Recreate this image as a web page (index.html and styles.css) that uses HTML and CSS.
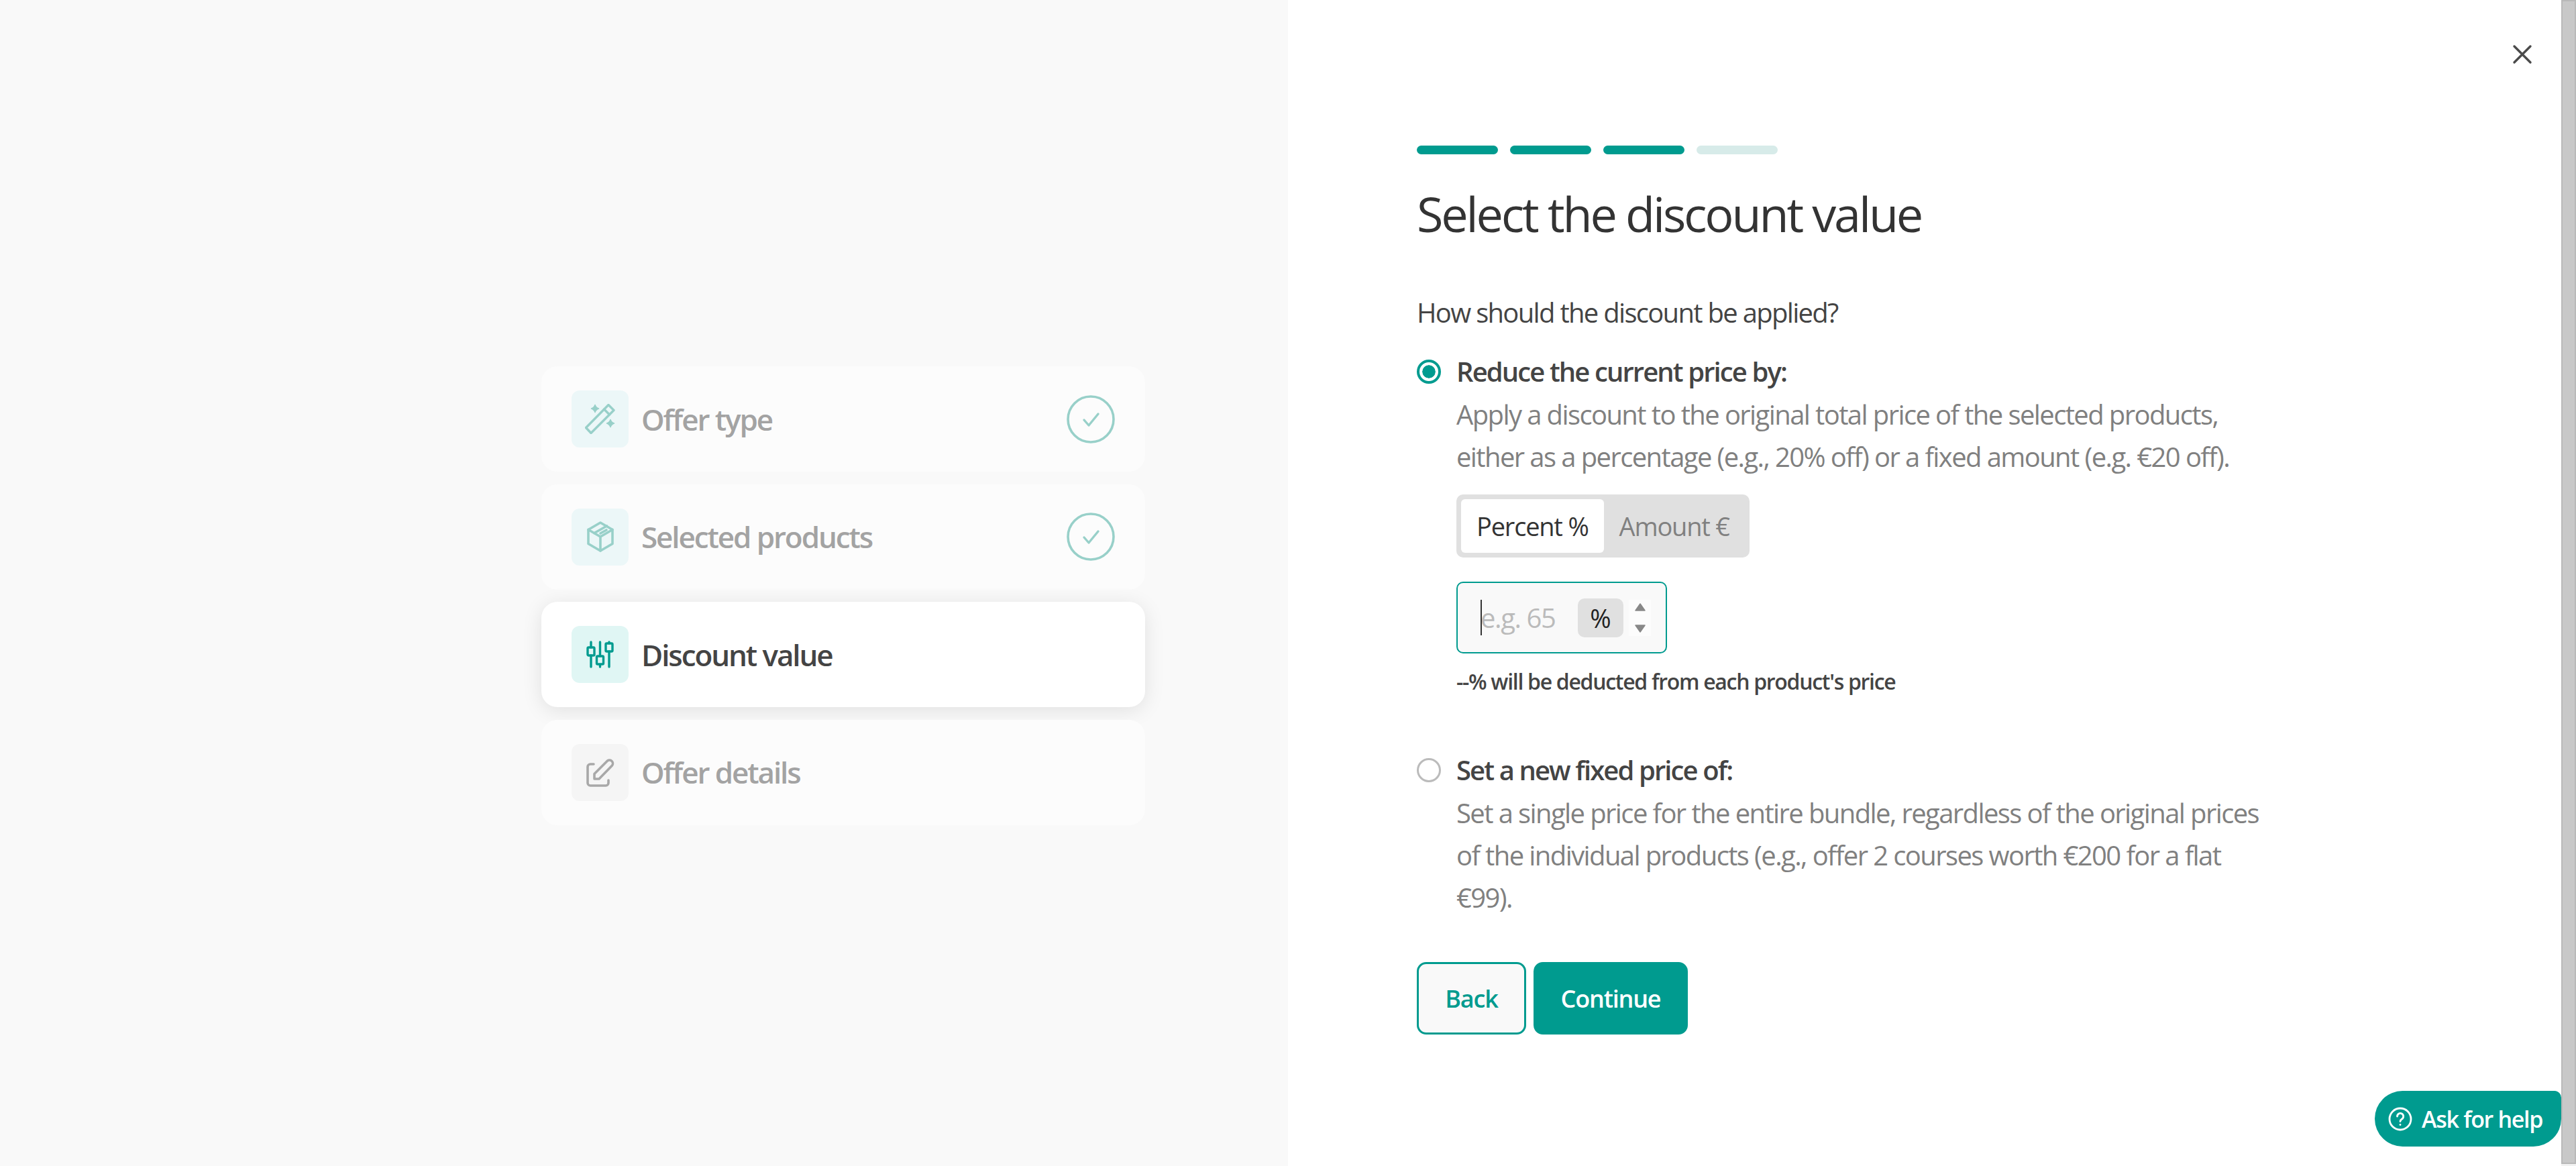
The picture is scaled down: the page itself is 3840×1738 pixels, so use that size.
FILE: index.html
```html
<!DOCTYPE html>
<html lang="en">
<head>
    <meta charset="UTF-8">
    <meta name="viewport" content="width=device-width, initial-scale=1.0">
    <title>Select the discount value</title>
    <link rel="stylesheet" href="styles.css">
</head>
<body>

<div class="steps-panel">
    <div class="steps">
        <div class="step done">
            <span class="step-icon">
                <svg width="45" height="45" viewBox="0 0 45 45" fill="none" stroke="currentColor" stroke-width="3.4" stroke-linejoin="round" stroke-linecap="round">
                    <path d="M35 1.5 43 9.5 9 43.5 1.5 35.5Z"/>
                    <path d="M28.5 8 36.5 16"/>
                    <path d="M15 1.5c1 3 2.500 4.500 5.500 5.500-3 1-4.500 2.500-5.500 5.500-1-3-2.500-4.500-5.500-5.500 3-1 4.500-2.500 5.500-5.500Z" fill="currentColor" stroke-width="1.500"/>
                    <path d="M38 23.500c1 3 2.500 4.500 5.500 5.500-3 1-4.500 2.500-5.500 5.500-1-3-2.500-4.500-5.500-5.500 3-1 4.500-2.500 5.500-5.500Z" fill="currentColor" stroke-width="1.500"/>
                </svg>
            </span>
            <span class="step-name">Offer type</span>
            <svg class="step-check" width="72" height="72" viewBox="0 0 72 72" fill="none" stroke="currentColor" stroke-linecap="round" stroke-linejoin="round">
                <circle cx="36" cy="36" r="34" stroke-width="3.6"/>
                <path d="M26 37 33 45 47 28" stroke-width="3.4"/>
            </svg>
        </div>
        <div class="step done">
            <span class="step-icon">
                <svg width="40" height="46" viewBox="0 0 40 46" fill="none" stroke="currentColor" stroke-width="3.600" stroke-linejoin="round" stroke-linecap="round">
                    <path d="M20 2 38 12.500V33.500L20 44 2 33.500V12.500Z"/>
                    <path d="M2 12.500 20 23 38 12.500M20 23V44"/>
                    <path d="M11 17.500 29.500 7M20 18 29 13"/>
                </svg>
            </span>
            <span class="step-name">Selected products</span>
            <svg class="step-check" width="72" height="72" viewBox="0 0 72 72" fill="none" stroke="currentColor" stroke-linecap="round" stroke-linejoin="round">
                <circle cx="36" cy="36" r="34" stroke-width="3.6"/>
                <path d="M26 37 33 45 47 28" stroke-width="3.4"/>
            </svg>
        </div>
        <div class="step current">
            <span class="step-icon">
                <svg width="41" height="41" viewBox="0 0 41 41" fill="none" stroke="currentColor" stroke-width="3.400" stroke-linejoin="round" stroke-linecap="round">
                    <path d="M7 2V10M7 22V39M20.500 2V23M20.500 36V39M34 2V4M34 16V39"/>
                    <rect x="2" y="10" width="10" height="12" rx="1.500"/>
                    <rect x="15.500" y="23" width="10" height="12" rx="1.500"/>
                    <rect x="29" y="4" width="10" height="12" rx="1.500"/>
                </svg>
            </span>
            <span class="step-name">Discount value</span>
        </div>
        <div class="step todo">
            <span class="step-icon">
                <svg width="42" height="43" viewBox="0 0 42 43" fill="none" stroke="currentColor" stroke-width="3.600" stroke-linejoin="round" stroke-linecap="round">
                    <path d="M11 9H6A4 4 0 0 0 2 13V37A4 4 0 0 0 6 41H29A4 4 0 0 0 33 37V33"/>
                    <path d="M12 31V23.500L31.500 4A5 5 0 0 1 38.500 11L19 31Z"/>
                </svg>
            </span>
            <span class="step-name">Offer details</span>
        </div>
    </div>
</div>

<div class="form-panel">
    <div class="progress">
        <span class="progress-bar on"></span>
        <span class="progress-bar on"></span>
        <span class="progress-bar on"></span>
        <span class="progress-bar"></span>
    </div>
    <h1>Select the discount value</h1>
    <p class="question">How should the discount be applied?</p>

    <div class="option">
        <span class="radio checked"></span>
        <div class="option-body">
            <div class="option-title">Reduce the current price by:</div>
            <p class="option-text">Apply a discount to the original total price of the selected products,<br>either as a percentage (e.g., 20% off) or a fixed amount (e.g. €20 off).</p>
            <div class="switch">
                <span class="switch-item active">Percent %</span>
                <span class="switch-item">Amount €</span>
            </div>
            <div class="amount-input">
                <span class="caret"></span>
                <span class="placeholder">e.g. 65</span>
                <span class="unit">%</span>
                <span class="spinner">
                    <svg width="16" height="12" viewBox="0 0 16 12"><path d="M8 1 15 11H1Z" fill="#888" stroke="#888" stroke-width="1.500" stroke-linejoin="round"/></svg>
                    <svg width="16" height="12" viewBox="0 0 16 12"><path d="M8 11 15 1H1Z" fill="#888" stroke="#888" stroke-width="1.500" stroke-linejoin="round"/></svg>
                </span>
            </div>
            <p class="hint">--% will be deducted from each product's price</p>
        </div>
    </div>

    <div class="option second">
        <span class="radio"></span>
        <div class="option-body">
            <div class="option-title">Set a new fixed price of:</div>
            <p class="option-text">Set a single price for the entire bundle, regardless of the original prices<br>of the individual products (e.g., offer 2 courses worth €200 for a flat<br>€99).</p>
        </div>
    </div>

    <div class="actions">
        <button class="btn btn-back" type="button">Back</button>
        <button class="btn btn-next" type="button">Continue</button>
    </div>

    <svg class="close" width="30" height="30" viewBox="0 0 30 30" fill="none" stroke="#4a4a4a" stroke-width="3.400" stroke-linecap="round">
        <path d="M3 3 27 27M27 3 3 27"/>
    </svg>

    <button class="help" type="button">
        <svg width="36" height="36" viewBox="0 0 36 36" fill="none" stroke="#fff" stroke-width="2.800" stroke-linecap="round" stroke-linejoin="round">
            <circle cx="18" cy="18" r="16"/>
            <path d="M13.500 14a4.600 4.600 0 1 1 7 4c-1.600 1-2.500 1.800-2.500 3.500"/>
            <path d="M18 26.500v.1"/>
        </svg>
        Ask for help
    </button>
</div>

<div class="scrollbar"><div class="scrollbar-thumb"></div></div>

</body>
</html>
```

FILE: styles.css
```css
* {
    box-sizing: border-box;
}
body {
    font-family: "Open Sans", "Noto Sans", sans-serif;
    margin: 0;
    height: 100vh;
    display: flex;
    overflow: hidden;
    background-color: white;
    color: #444;
}

/* left side */
.steps-panel {
    width: 1920px;
    background-color: #f9f9f9;
    padding: 546px 0 0 807px;
}
.steps {
    width: 900px;
    display: flex;
    flex-direction: column;
    gap: 18.5px;
}
.step {
    height: 157px;
    padding: 0 45px;
    display: flex;
    align-items: center;
    gap: 19px;
    border-radius: 24px;
    background-color: #fcfcfc;
    font-size: 44px;
    font-weight: 600;
    letter-spacing: -2.1px;
    color: #a3a3a3;
}
.step.current {
    background-color: white;
    color: #444;
    box-shadow: 0 5px 30px rgba(0, 0, 0, 0.1);
}
.step-icon {
    width: 85px;
    height: 85px;
    flex-shrink: 0;
    display: flex;
    align-items: center;
    justify-content: center;
    border-radius: 12px;
    background-color: #ecf7f8;
    color: #98d0c9;
}
.current .step-icon {
    background-color: #e0f6f4;
    color: #009b8f;
}
.todo .step-icon {
    background-color: #f5f5f5;
    color: #a8a8a8;
}
.step-check {
    margin-left: auto;
    color: #98d0c9;
}

/* right side */
.form-panel {
    flex: 1;
    position: relative;
    padding: 217px 0 0 192px;
}
.progress {
    display: flex;
    gap: 18px;
}
.progress-bar {
    width: 121px;
    height: 13px;
    border-radius: 7px;
    background-color: #d7ebe9;
}
.progress-bar.on {
    background-color: #009b8f;
}
h1 {
    margin: 39px 0 0;
    font-size: 72px;
    line-height: 98px;
    font-weight: 400;
    letter-spacing: -3.2px;
    color: #333;
}
.question {
    margin: 72px 0 0;
    font-size: 40px;
    line-height: 54px;
    letter-spacing: -1.7px;
}
.option {
    display: flex;
    gap: 23px;
    margin-top: 34px;
}
.option.second {
    margin-top: 83px;
}
.radio {
    width: 36px;
    height: 36px;
    flex-shrink: 0;
    margin-top: 9px;
    border-radius: 50%;
    border: 3px solid #bbb;
    background-color: white;
}
.radio.checked {
    border: 4px solid #009b8f;
    padding: 4px;
    background-color: #009b8f;
    background-clip: content-box;
    box-shadow: inset 0 0 0 4px white;
}
.option-title {
    font-size: 40px;
    line-height: 54px;
    font-weight: 600;
    letter-spacing: -1.9px;
}
.option-text {
    margin: 5px 0 0;
    font-size: 40px;
    line-height: 63px;
    letter-spacing: -1.6px;
    color: #808080;
}
.switch {
    display: inline-flex;
    margin-top: 25px;
    padding: 7px;
    height: 94px;
    border-radius: 10px;
    background-color: #e0e0e0;
    font-size: 38px;
    letter-spacing: -1.2px;
}
.switch-item {
    display: flex;
    align-items: center;
    padding: 0 23px;
    color: #808080;
}
.switch-item.active {
    background-color: white;
    color: #333;
    border-radius: 6px;
}
.amount-input {
    width: 314px;
    height: 107px;
    margin-top: 36px;
    padding: 0 0 0 34px;
    display: flex;
    align-items: center;
    position: relative;
    border: 2.4px solid #009b8f;
    border-radius: 10px;
    background-color: #f9f9f9;
}
.caret {
    position: absolute;
    left: 34px;
    top: 25px;
    width: 2px;
    height: 53px;
    background-color: #333;
}
.placeholder {
    width: 145px;
    font-size: 40px;
    letter-spacing: -1.4px;
    color: #bbb;
}
.unit {
    width: 68px;
    height: 58px;
    display: flex;
    align-items: center;
    justify-content: center;
    border-radius: 10px;
    background-color: #e0e0e0;
    font-size: 38px;
    color: #222;
}
.spinner {
    width: 33px;
    height: 54px;
    margin-left: 8px;
    display: flex;
    flex-direction: column;
    align-items: center;
    justify-content: space-between;
    padding: 5px 0;
    background-color: #fcfcfc;
}
.hint {
    margin: 20px 0 0;
    font-size: 32px;
    line-height: 44px;
    font-weight: 600;
    letter-spacing: -1.3px;
}
.actions {
    display: flex;
    gap: 11px;
    margin-top: 65px;
}
.btn {
    height: 108px;
    font-family: inherit;
    font-size: 36px;
    font-weight: 600;
    letter-spacing: -1.2px;
    border-radius: 14px;
    border: 3px solid #009b8f;
    cursor: pointer;
}
.btn-back {
    width: 163px;
    background-color: #f9f9f9;
    color: #009b8f;
}
.btn-next {
    width: 230px;
    background-color: #009b8f;
    color: white;
}
.close {
    position: absolute;
    top: 66px;
    left: 1825px;
}
.help {
    position: absolute;
    left: 1620px;
    top: 1626px;
    width: 278px;
    height: 83px;
    padding: 0 0 0 20px;
    display: flex;
    align-items: center;
    gap: 14px;
    border: none;
    border-radius: 42px 10px 42px 42px;
    background-color: #009b8f;
    color: white;
    font-family: inherit;
    font-size: 34px;
    font-weight: 600;
    letter-spacing: -1.3px;
}

/* browser scrollbar from the screenshot */
.scrollbar {
    width: 22px;
    background-color: #f1f1f1;
}
.scrollbar-thumb {
    height: 1735px;
    background-color: #c8c8c8;
    border: 2px solid #b9b9b9;
}
```
